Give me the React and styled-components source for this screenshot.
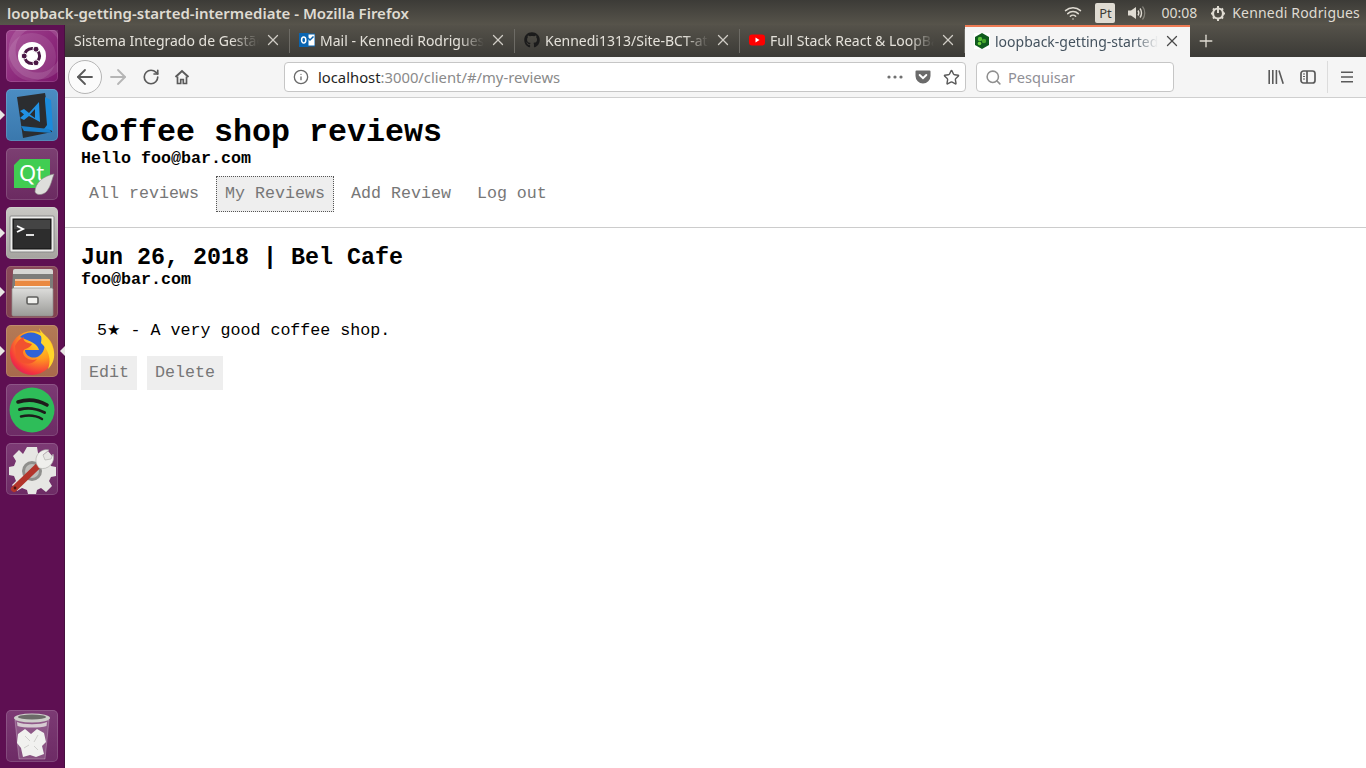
import React from 'react';
import styled, { createGlobalStyle } from 'styled-components';
import { ArrowLeft, ArrowRight, RotateCw, Info, Star, Search, Plus, X, Wifi } from 'lucide-react';
import { FaGithub } from 'react-icons/fa';

const GlobalStyle = createGlobalStyle`
  html, body { margin:0; padding:0; height:100%; overflow:hidden; background:#fff; }
  #root { height:100%; }
`;

const UI_FONT = `"Noto Sans", "Open Sans", sans-serif`;
const MONO_FONT = `"Liberation Mono", "DejaVu Sans Mono", monospace`;

/* launcher icons */
const UbuntuIcon = () => (
  <svg width="52" height="52" viewBox="0 0 52 52">
    <circle cx="26" cy="27" r="24" fill="#fff" opacity=".1" />
    <circle cx="32" cy="20" r="26" fill="none" stroke="#fff" strokeOpacity=".12" strokeWidth="7" />
    <circle cx="26" cy="26" r="14" fill="#fff" />
    <circle cx="26" cy="26" r="7.6" fill="none" stroke="#4b1845" strokeWidth="3" />
    <circle cx="18.2" cy="26" r="3" fill="#4b1845" stroke="#fff" />
    <circle cx="30" cy="19.2" r="3" fill="#4b1845" stroke="#fff" />
    <circle cx="30" cy="32.8" r="3" fill="#4b1845" stroke="#fff" />
  </svg>
);

const VsCodeIcon = () => (
  <svg width="52" height="52" viewBox="0 0 52 52">
    <path d="M11 8 39 4 46 43 17 49Z" fill="#2b2d30" />
    <path d="M39 8 45 11 47 42 38 40 41 36 39 12Z" fill="#1c8bdb" />
    <path d="M15 37 43 40 46 44 18 42Z" fill="#1a7fca" />
    <path d="M14 22 18 20 23 24 33 13 34 33 23 27 18 31 14 29 18 25.5ZM24 25.5 29 29 29 20Z" fill="#2191e3" fillRule="evenodd" />
  </svg>
);

const QtIcon = () => (
  <svg width="52" height="52" viewBox="0 0 52 52">
    <path d="M14 11H44V36H31L30 40H8V17Z" fill="#41cd52" />
    <text x="13" y="33" fontFamily={UI_FONT} fontSize="22" fill="#fff">Qt</text>
    <path d="M48 26C37 28 29 35 29 44 31 48 38 47 41 43 45 38 46 31 48 26Z" fill="#dededb" stroke="#8d8d8a" strokeWidth=".6" />
  </svg>
);

const TerminalIcon = () => (
  <svg width="52" height="52" viewBox="0 0 52 52">
    <rect x="4" y="9" width="44" height="36" rx="1" fill="#eeeeec" stroke="#8a8a8a" />
    <rect x="7" y="12" width="38" height="30" fill="#2d2d2d" stroke="#111" />
    <rect x="8" y="13" width="36" height="9" fill="#4a4a4a" opacity=".8" />
    <path d="M11 19 17 22 11 25" fill="none" stroke="#fff" strokeWidth="1.9" />
    <path d="M20 28H28" stroke="#fff" strokeWidth="1.7" />
  </svg>
);

const FilesIcon = () => (
  <svg width="52" height="52" viewBox="0 0 52 52">
    <defs>
      <linearGradient id="cabinetFront" x1="0" y1="0" x2="0" y2="1">
        <stop offset="0" stopColor="#dddddb" />
        <stop offset="1" stopColor="#9b9b98" />
      </linearGradient>
    </defs>
    <path d="M7 5Q7 3 9 3H45Q47 3 47 5V24H6Z" fill="#7d7d7a" />
    <path d="M7 5Q7 3 9 3H45Q47 3 47 5V8H7Z" fill="#d6d6d3" />
    <rect x="9" y="13" width="35" height="2" fill="#f4c19a" />
    <rect x="9" y="15" width="35" height="5" fill="#ea8a42" />
    <rect x="8" y="20" width="36" height="3" fill="#f3f3f0" />
    <rect x="6" y="22" width="41" height="28" rx="1.5" fill="url(#cabinetFront)" stroke="#8f8f8c" strokeWidth=".7" />
    <rect x="21" y="31" width="11" height="7" rx="1.5" fill="#f1f1ee" stroke="#5f5f5d" strokeWidth="1.6" />
  </svg>
);

const FirefoxIcon = () => (
  <svg width="52" height="52" viewBox="0 0 52 52">
    <defs>
      <radialGradient id="ffOuter" cx=".7" cy=".2" r=".95">
        <stop offset="0" stopColor="#ffe226" />
        <stop offset=".45" stopColor="#ff9a1f" />
        <stop offset=".8" stopColor="#f5353d" />
        <stop offset="1" stopColor="#d4136e" />
      </radialGradient>
    </defs>
    <circle cx="26" cy="28" r="22" fill="url(#ffOuter)" />
    <path d="M14 12C20 6 30 6 36 12 40 17 40 26 33 31 27 35 19 31 19 25L33 25C32 19 24 16 14 12Z" fill="#2f63d8" />
    <path d="M9 21C12 15 15 13 18 12 16 16 21 18 26 19 24 24 17 23 17 27 17 32 24 37 31 34 26 41 14 40 10 32Z" fill="#f2512f" />
    <path d="M33 3C36 9 46 14 48 27 49 34 46 40 42 44 46 34 42 24 35 18 36 13 35 8 33 3Z" fill="#ffd52a" />
  </svg>
);

const SpotifyIcon = () => (
  <svg width="52" height="52" viewBox="0 0 52 52">
    <circle cx="26" cy="26" r="22.5" fill="#2ebd59" />
    <g fill="none" stroke="#1d1d1b" strokeLinecap="round">
      <path d="M12 18C21 15 32 16 41 21" strokeWidth="3.6" />
      <path d="M13.5 25.5C21 23.5 31 24.5 38.5 28.5" strokeWidth="3" />
      <path d="M15 32.5C22 31 30 31.5 36 35" strokeWidth="2.5" />
    </g>
  </svg>
);

const SettingsIcon = () => (
  <svg width="52" height="52" viewBox="0 0 52 52">
    <path d="M21 4H31L32 10 37 12 42 8 47 14 43 19 45 23 50 24V33L45 34 43 38 46 43 40 49 35 45 31 47 30 51H22L21 47 16 45 11 48 6 42 10 38 8 33 3 32V24L8 23 10 18 7 13 13 7 17 11Z" fill="#e6e6e3" />
    <circle cx="26" cy="28" r="10" fill="#8f8f8c" />
    <circle cx="26" cy="28" r="7" fill="#bdbdb9" />
    <path d="M8 46 33 22" stroke="#b3352b" strokeWidth="6" strokeLinecap="round" />
    <path d="M31 22C27 13 35 5 43 7L37 12 39 17 45 16 47 11C50 19 42 28 33 25Z" fill="#efefec" stroke="#a8a8a4" strokeWidth=".6" />
    <circle cx="9" cy="45" r="1.4" fill="#4a1512" />
  </svg>
);

const TrashIcon = () => (
  <svg width="52" height="52" viewBox="0 0 52 52">
    <path d="M9 10 13 49H39L43 10Z" fill="#fff" fillOpacity=".18" stroke="#fff" strokeOpacity=".25" />
    <ellipse cx="26" cy="8" rx="18" ry="4.5" fill="#cfcfcb" />
    <ellipse cx="26" cy="7" rx="14" ry="2.4" fill="#6b6b68" />
    <path d="M11 12C18 15 34 15 41 12L40.5 16C34 18 18 18 11.5 16Z" fill="#e8e8e5" opacity=".8" />
    <path d="M12 24 19 19 25 24 31 19 38 23 40 32 36 36 38 44 30 47 24 45 17 47 15 38 11 33Z" fill="#f1f1ef" />
    <path d="M19 26 24 31M32 25 28 32M18 38 23 35M32 40 28 36" stroke="#cfcfcc" strokeWidth="1" />
  </svg>
);

/* tab favicons */
const OutlookIcon = () => (
  <svg width="16" height="16" viewBox="0 0 16 16">
    <rect x="6" y="2" width="10" height="12" fill="#fff" stroke="#0a64b0" />
    <path d="M9 6 11 8 14.5 4.5" stroke="#0a64b0" strokeWidth="1.5" fill="none" />
    <rect y="1" width="9.5" height="14" fill="#0a64b0" />
    <ellipse cx="4.7" cy="8" rx="2.1" ry="3" fill="none" stroke="#fff" strokeWidth="1.5" />
  </svg>
);

const YoutubeIcon = () => (
  <svg width="16" height="16" viewBox="0 0 16 16">
    <rect y="2.5" width="16" height="11" rx="3" fill="#f00" />
    <path d="M6.5 5.5 10.5 8 6.5 10.5Z" fill="#fff" />
  </svg>
);

const LoopbackIcon = () => (
  <svg width="16" height="16" viewBox="0 0 16 16">
    <rect width="16" height="16" fill="#fff" />
    <path d="M8 0 15 4V12L8 16 1 12V4Z" fill="#0f5b1e" />
    <circle cx="6" cy="6" r="2.2" fill="#5cc23a" />
    <circle cx="10" cy="8" r="2.2" fill="#45a82c" />
    <circle cx="5.5" cy="10.5" r="1.8" fill="#6fd13f" />
  </svg>
);

/* browser chrome icons */
const HomeIcon = () => (
  <svg width="16" height="16" viewBox="0 0 16 16" fill="none" stroke="#5a5a5a" strokeWidth="2">
    <path d="M1.5 8 8 2l6.5 6" />
    <path d="M3.5 7.5V14.5H6.7V10.5H9.3V14.5H12.5V7.5" strokeWidth="1.7" />
  </svg>
);

const DotsIcon = () => (
  <svg width="16" height="4" viewBox="0 0 16 4" fill="#707070">
    <circle cx="2" cy="2" r="1.6" />
    <circle cx="8" cy="2" r="1.6" />
    <circle cx="14" cy="2" r="1.6" />
  </svg>
);

const PocketIcon = () => (
  <svg width="16" height="16" viewBox="0 0 16 16">
    <path d="M1.5 1.5H14.5A1 1 0 0 1 15.5 2.5V7A7.5 7.5 0 0 1 .5 7V2.5A1 1 0 0 1 1.5 1.5Z" fill="#6a6a6a" />
    <path d="M4.7 6 8 9.2 11.3 6" fill="none" stroke="#fff" strokeWidth="2" strokeLinecap="round" />
  </svg>
);

const LibraryIcon = () => (
  <svg width="16" height="14" viewBox="0 0 16 14" stroke="#5a5a5a" strokeWidth="1.6" fill="none">
    <path d="M1.2 0V14M4.8 0V14M8.4 0V14M11 .5 15.2 13.8" />
  </svg>
);

const SidebarIcon = () => (
  <svg width="16" height="14" viewBox="0 0 16 14" fill="none" stroke="#5a5a5a" strokeWidth="1.7">
    <rect x="1" y="1" width="14" height="12" rx="2.5" />
    <path d="M7 1V13" />
    <path d="M3 4H5M3 6.5H5M3 9H5" strokeWidth="1.2" />
  </svg>
);

const MenuIcon = () => (
  <svg width="12" height="12" viewBox="0 0 12 12" stroke="#5a5a5a" strokeWidth="1.6">
    <path d="M0 1.2H12M0 6H12M0 10.8H12" />
  </svg>
);

/* top panel icons */
const VolumeIcon = () => (
  <svg width="20" height="16" viewBox="0 0 20 16" fill="none" stroke="#dfdbd2">
    <path d="M1 5.5H4L9 2V14L4 10.5H1Z" fill="#dfdbd2" stroke="none" />
    <path d="M11 5.5C12 7 12 9 11 10.5" strokeWidth="1.4" />
    <path d="M13 3.5C15 6 15 10 13 12.5" strokeWidth="1.4" />
    <path d="M15.5 1.5C18.5 5 18.5 11 15.5 14.5" strokeWidth="1.2" opacity=".4" />
  </svg>
);

const PowerGearIcon = () => (
  <svg width="16" height="16" viewBox="0 0 16 16" fill="none" stroke="#dfdbd2">
    <circle cx="8" cy="8.5" r="5" strokeWidth="2.2" />
    <path d="M8 1V8" strokeWidth="2" />
    <path d="M1 8.5H3M13 8.5H15M3 3.5 4.3 4.8M13 3.5 11.7 4.8M3 13.5 4.3 12.2M13 13.5 11.7 12.2M8 14V16" strokeWidth="2" />
  </svg>
);

const Screen = styled.div`
  display:flex;
  flex-direction:column;
  width:1366px;
  height:768px;
  overflow:hidden;
`;

const TopPanel = styled.header`
  display:flex;
  align-items:center;
  justify-content:space-between;
  flex:0 0 25px;
  padding:0 7px;
  background:linear-gradient(#3c3b37, #57544b);
  font-family:${UI_FONT};
`;

const WindowTitle = styled.div`
  font-size:15px;
  font-weight:600;
  color:#dfdbd2;
`;

const Indicators = styled.div`
  display:flex;
  align-items:center;
  margin-right:-1px;
  color:#dfdbd2;
  font-size:14px;
`;

const PtBadge = styled.div`
  width:20px;
  height:20px;
  margin:0 12px 0 13px;
  border-radius:2px;
  background:#dfdbd2;
  color:#3c3b37;
  font-size:13px;
  line-height:20px;
  text-align:center;
`;

const Clock = styled.span`
  margin:0 13px 0 14px;
`;

const UserName = styled.span`
  margin-left:6px;
  letter-spacing:.18px;
`;

const Body = styled.div`
  display:flex;
  flex:1;
  min-height:0;
`;

const Launcher = styled.nav`
  display:flex;
  flex-direction:column;
  flex:0 0 65px;
  box-sizing:border-box;
  padding:5px 0 6px 6px;
  background:#5e0f52;
  border-right:1px solid #47103f;
`;

const LauncherGap = styled.div`
  flex:1;
`;

const Tile = styled.div`
  position:relative;
  flex:0 0 52px;
  width:52px;
  margin-bottom:7px;
  border-radius:5px;
  background:${p => p.$bg};
  box-shadow:inset 0 0 0 1px rgba(255,255,255,.14);

  &:last-child { margin-bottom:0; }

  svg { display:block; }

  ${p => p.$open && `
    &::before {
      content:'';
      position:absolute;
      left:-6px;
      top:21px;
      border:5px solid transparent;
      border-left-color:#e8e6e3;
    }
  `}

  ${p => p.$focused && `
    &::after {
      content:'';
      position:absolute;
      right:-7px;
      top:21px;
      border:5px solid transparent;
      border-right-color:#e8e6e3;
      border-left-width:0;
    }
  `}
`;

const Main = styled.main`
  display:flex;
  flex-direction:column;
  flex:1;
  min-width:0;
`;

const TabBar = styled.div`
  display:flex;
  align-items:stretch;
  flex:0 0 32px;
  background:linear-gradient(#55524a, #3b3a36);
  font-family:${UI_FONT};
`;

const Tab = styled.div`
  display:flex;
  align-items:center;
  box-sizing:border-box;
  flex:0 0 225px;
  min-width:0;
  padding:${p => (p.$active ? '0 9px 2px 9px' : '0 8px 2px 9px')};
  gap:5px;
  font-size:14px;
  color:${p => (p.$active ? '#44525e' : '#e4e1da')};
  background:${p => (p.$active ? '#f5f5f5' : 'transparent')};
  border-top:${p => (p.$active ? '2px solid #ee7b54' : '0')};
  position:relative;

  ${p => p.$divided && `
    &::after {
      content:'';
      position:absolute;
      right:0;
      top:4px;
      bottom:4px;
      width:1px;
      background:#6d6b65;
    }
  `}

  svg { flex:none; }
`;

const TabLabel = styled.span`
  flex:1;
  min-width:0;
  overflow:hidden;
  white-space:nowrap;
  -webkit-mask-image:linear-gradient(to right, #000 85%, transparent);
  mask-image:linear-gradient(to right, #000 85%, transparent);
`;

const NewTab = styled.div`
  display:flex;
  align-items:center;
  margin-left:6px;
  color:#dfdbd2;
`;

const NavBar = styled.div`
  display:flex;
  align-items:center;
  flex:0 0 41px;
  box-sizing:border-box;
  padding:0 0 0 3px;
  background:#f5f5f5;
  border-bottom:1px solid #cfcfcf;
  font-family:${UI_FONT};
`;

const BackButton = styled.div`
  display:flex;
  align-items:center;
  justify-content:center;
  width:34px;
  height:34px;
  border:1px solid #b5b5b5;
  border-radius:50%;
  background:#fbfbfb;
  box-sizing:border-box;
`;

const NavIcon = styled.div`
  display:flex;
  align-items:center;
  justify-content:center;
  width:${p => p.$w || 32}px;
`;

const Field = styled.div`
  display:flex;
  align-items:center;
  box-sizing:border-box;
  height:30px;
  border:1px solid #c6c6c6;
  border-radius:4px;
  background:#fff;
`;

const UrlField = styled(Field)`
  width:682px;
  margin-left:88px;
  padding:0 5px 0 8px;
  font-size:14.8px;
`;

const Url = styled.div`
  flex:1;
  margin-left:9px;
  color:#8a8a8a;
  span { color:#1f1f1f; }
`;

const UrlActions = styled.div`
  display:flex;
  align-items:center;
  gap:12px;
  svg { display:block; }
`;

const SearchField = styled(Field)`
  width:198px;
  margin-left:10px;
  padding:0 8px;
  gap:6px;
  font-size:14.6px;
  color:#8f8f96;
`;

const ToolbarEnd = styled.div`
  display:flex;
  align-items:center;
  gap:16px;
  margin-left:94px;
  height:32px;
`;

const ToolbarDivider = styled.div`
  width:1px;
  height:32px;
  margin:0 -3px 0 -5px;
  background:#dcdcdc;
`;

const Page = styled.div`
  flex:1;
  background:#fff;
  color:#000;
  font-family:${MONO_FONT};
  font-size:16.67px;
  line-height:19px;
`;

const PageHeader = styled.div`
  padding:19px 16px 15px;
  border-bottom:1px solid #ccc;
`;

const Title = styled.h1`
  margin:0;
  font-size:31.67px;
  line-height:32px;
`;

const Greeting = styled.div`
  font-weight:bold;
`;

const Menu = styled.div`
  display:flex;
  gap:8px;
  margin:8px 0 0 -1px;
`;

const MenuLink = styled.a`
  box-sizing:border-box;
  height:36px;
  padding:0 8px;
  line-height:33px;
  color:#777;
  border:1px dotted ${p => (p.$current ? '#555' : 'transparent')};
  background:${p => (p.$current ? '#eee' : 'transparent')};
`;

const Review = styled.article`
  padding:18px 16px 15px;
`;

const ReviewTitle = styled.h2`
  margin:0;
  font-size:23.33px;
  line-height:24px;
`;

const Author = styled.div`
  font-weight:bold;
`;

const ReviewText = styled.p`
  margin:32px 0 0;
  padding-left:16px;
`;

const StarGlyph = styled.span`
  font-family:"DejaVu Sans", sans-serif;
  font-size:15px;
`;

const Actions = styled.div`
  display:flex;
  gap:10px;
  margin-top:16px;
`;

const ActionButton = styled.a`
  padding:0 8px;
  height:34px;
  line-height:33px;
  color:#777;
  background:#eee;
`;

const tabs = [
  { label: 'Sistema Integrado de Gestão' },
  { label: 'Mail - Kennedi Rodrigues', icon: <OutlookIcon /> },
  { label: 'Kennedi1313/Site-BCT-atualizado', icon: <FaGithub size={16} color="#1b1b1b" /> },
  { label: 'Full Stack React & LoopBack', icon: <YoutubeIcon /> },
];

const launcherApps = [
  { name: 'ubuntu', bg: 'linear-gradient(135deg,#a0428f,#7d176c)', icon: <UbuntuIcon /> },
  { name: 'code', bg: 'linear-gradient(#4b8dc3,#3a78ad)', icon: <VsCodeIcon />, open: true },
  { name: 'qt', bg: 'linear-gradient(#7c3f72,#6b2a61)', icon: <QtIcon /> },
  { name: 'terminal', bg: 'linear-gradient(#c9c8c4,#a5a39f)', icon: <TerminalIcon />, open: true },
  { name: 'files', bg: 'linear-gradient(#8a4a5a,#81414f)', icon: <FilesIcon />, open: true },
  { name: 'firefox', bg: 'linear-gradient(#b47a55,#a8694c)', icon: <FirefoxIcon />, open: true, focused: true },
  { name: 'spotify', bg: 'linear-gradient(#7c3a74,#6d2b65)', icon: <SpotifyIcon /> },
  { name: 'settings', bg: 'linear-gradient(#7c3a74,#6d2b65)', icon: <SettingsIcon /> },
];

export default function App() {
  return (
    <Screen>
      <GlobalStyle />
      <TopPanel>
        <WindowTitle>loopback-getting-started-intermediate - Mozilla Firefox</WindowTitle>
        <Indicators>
          <Wifi size={18} color="#dfdbd2" />
          <PtBadge>Pt</PtBadge>
          <VolumeIcon />
          <Clock>00:08</Clock>
          <PowerGearIcon />
          <UserName>Kennedi Rodrigues</UserName>
        </Indicators>
      </TopPanel>
      <Body>
        <Launcher>
          {launcherApps.map(app => (
            <Tile key={app.name} $bg={app.bg} $open={app.open} $focused={app.focused}>
              {app.icon}
            </Tile>
          ))}
          <LauncherGap />
          <Tile $bg="linear-gradient(#7c3a74,#6d2b65)">
            <TrashIcon />
          </Tile>
        </Launcher>
        <Main>
          <TabBar>
            {tabs.map((tab, idx) => (
              <Tab key={idx} $divided>
                {tab.icon}
                <TabLabel>{tab.label}</TabLabel>
                <X size={18} color="#cfccc5" strokeWidth={1.7} />
              </Tab>
            ))}
            <Tab $active>
              <LoopbackIcon />
              <TabLabel>loopback-getting-started</TabLabel>
              <X size={18} color="#4a4a4a" strokeWidth={1.7} />
            </Tab>
            <NewTab><Plus size={20} strokeWidth={1.6} /></NewTab>
          </TabBar>
          <NavBar>
            <BackButton><ArrowLeft size={24} color="#5a5a5a" strokeWidth={1.8} /></BackButton>
            <NavIcon $w={32}><ArrowRight size={24} color="#b5b5b5" strokeWidth={1.8} /></NavIcon>
            <NavIcon $w={34}><RotateCw size={18} color="#5a5a5a" strokeWidth={2.2} /></NavIcon>
            <NavIcon $w={28}><HomeIcon /></NavIcon>
            <UrlField>
              <Info size={16} color="#6a6a6a" />
              <Url><span>localhost</span>:3000/client/#/my-reviews</Url>
              <UrlActions>
                <DotsIcon />
                <PocketIcon />
                <Star size={17} color="#5a5a5a" strokeWidth={2} />
              </UrlActions>
            </UrlField>
            <SearchField>
              <Search size={17} color="#8f8f8f" strokeWidth={2.2} />
              Pesquisar
            </SearchField>
            <ToolbarEnd>
              <NavIcon $w={16}><LibraryIcon /></NavIcon>
              <NavIcon $w={16}><SidebarIcon /></NavIcon>
              <ToolbarDivider />
              <NavIcon $w={12}><MenuIcon /></NavIcon>
            </ToolbarEnd>
          </NavBar>
          <Page>
            <PageHeader>
              <Title>Coffee shop reviews</Title>
              <Greeting>Hello foo@bar.com</Greeting>
              <Menu>
                <MenuLink>All reviews</MenuLink>
                <MenuLink $current>My Reviews</MenuLink>
                <MenuLink>Add Review</MenuLink>
                <MenuLink>Log out</MenuLink>
              </Menu>
            </PageHeader>
            <Review>
              <ReviewTitle>Jun 26, 2018 | Bel Cafe</ReviewTitle>
              <Author>foo@bar.com</Author>
              <ReviewText>5<StarGlyph>★</StarGlyph> - A very good coffee shop.</ReviewText>
              <Actions>
                <ActionButton>Edit</ActionButton>
                <ActionButton>Delete</ActionButton>
              </Actions>
            </Review>
          </Page>
        </Main>
      </Body>
    </Screen>
  );
}
